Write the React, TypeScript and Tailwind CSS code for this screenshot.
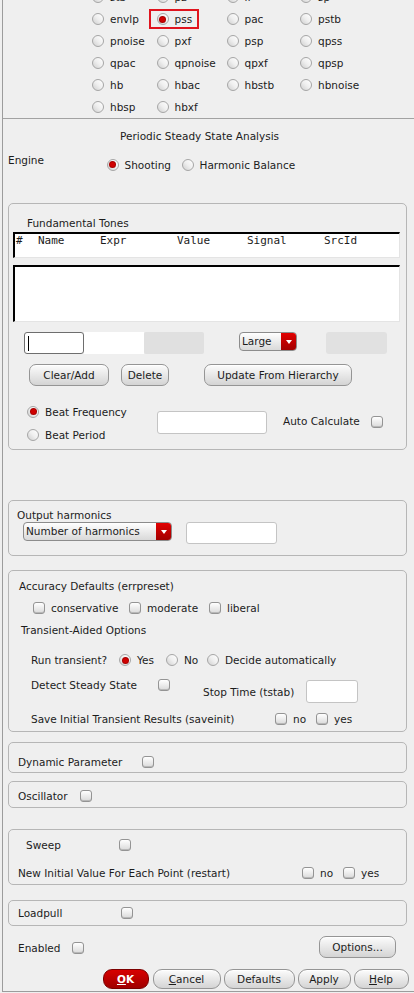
import React from "react";

function Radio({ on = false }: { on?: boolean }) {
  return (
    <span className="inline-flex h-[12px] w-[12px] shrink-0 items-center justify-center rounded-full border border-[#a6a6a6] bg-gradient-to-tr from-[#cfcfcf] via-[#efefef] to-white">
      {on && (
        <span className="h-[5px] w-[5px] rounded-full bg-[#d00000] shadow-[0_0_0_1px_#a80000]" />
      )}
    </span>
  );
}

function Check() {
  return (
    <span className="inline-block h-[12px] w-[12px] shrink-0 rounded-[3px] border border-[#949494] bg-gradient-to-b from-white to-[#dadada] shadow-[inset_0_-1px_0_#b8b8b8]" />
  );
}

function RadioItem({ label, on = false, className = "" }: { label: string; on?: boolean; className?: string }) {
  return (
    <div className={`flex items-center gap-[6px] ${className}`}>
      <Radio on={on} />
      <span>{label}</span>
    </div>
  );
}

function CheckItem({ label, className = "" }: { label: string; className?: string }) {
  return (
    <div className={`flex items-center gap-[6px] ${className}`}>
      <Check />
      <span>{label}</span>
    </div>
  );
}

function Btn({ children, className = "" }: { children: React.ReactNode; className?: string }) {
  return (
    <div
      className={`flex shrink-0 items-center justify-center rounded-[7px] border border-[#959595] bg-gradient-to-b from-[#fcfcfc] to-[#d4d4d4] shadow-[inset_0_1px_0_#ffffff] ${className}`}
    >
      {children}
    </div>
  );
}

function Dropdown({ label, className }: { label: string; className: string }) {
  return (
    <div
      className={`flex shrink-0 overflow-hidden rounded-[4px] border border-[#8c8c8c] bg-gradient-to-b from-white to-[#d9d9d9] ${className}`}
    >
      <span className="flex-1 pl-[2px] leading-[17px]">{label}</span>
      <span className="flex w-[15px] items-center justify-center bg-gradient-to-b from-[#e20000] to-[#a20000]">
        <span className="h-0 w-0 border-x-[3.5px] border-t-[4px] border-x-transparent border-t-white" />
      </span>
    </div>
  );
}

function Box({ className = "", children }: { className?: string; children: React.ReactNode }) {
  return (
    <div className={`ml-[5px] w-[399px] rounded-[5px] border border-[#b6b6b6] ${className}`}>
      {children}
    </div>
  );
}

const analyses = [
  ["stb", "pz", "lf", "sp"],
  ["envlp", "pss", "pac", "pstb"],
  ["pnoise", "pxf", "psp", "qpss"],
  ["qpac", "qpnoise", "qpxf", "qpsp"],
  ["hb", "hbac", "hbstb", "hbnoise"],
  ["hbsp", "hbxf"],
];

export default function App() {
  return (
    <div className="h-[993px] w-[414px] overflow-hidden bg-[#efefef] font-[family-name:DejaVu_Sans,sans-serif] text-[10.5px] leading-[14px] text-[#1c1c1c]">
      <div className="ml-[2px] flex h-[992px] w-[412px] flex-col border-b border-l border-[#9c9c9c]">
        {/* analysis chooser */}
        <div className="h-[119px] shrink-0 overflow-hidden border-b border-[#a2a2a2]">
          <div className="ml-[89px] mt-[-14px] grid grid-cols-[64.5px_70px_73.5px_auto]">
            {analyses.map((row, r) =>
              row.map((name) => (
                <div key={`${r}-${name}`} className="relative flex h-[22px] items-center">
                  <RadioItem label={name} on={name === "pss"} />
                  {name === "pss" && (
                    <span className="absolute left-[-8px] top-[1px] h-[20px] w-[50px] border-2 border-[#e0141e]" />
                  )}
                </div>
              ))
            )}
          </div>
        </div>

        <div className="ml-[117px] mt-[10px]">Periodic Steady State Analysis</div>

        <div className="mt-[10px] flex h-[20px]">
          <span className="ml-[5px] w-[98.5px]">Engine</span>
          <div className="mt-[3px] flex">
            <RadioItem label="Shooting" on className="w-[75px]" />
            <RadioItem label="Harmonic Balance" />
          </div>
        </div>

        {/* Fundamental tones */}
        <Box className="mt-[30px] pb-[3px]">
          <div className="ml-[18px] mt-[12px]">Fundamental Tones</div>
          <div className="ml-[4px] mt-[2px] h-[26px] w-[387px] border-b border-l-2 border-r border-t-2 border-b-[#e4e4e4] border-l-black border-r-[#e4e4e4] border-t-black bg-white">
            <div className="flex pl-[1px] font-[family-name:DejaVu_Sans_Mono,monospace] text-[11px] leading-[13px]">
              <span className="w-[22px]">#</span>
              <span className="w-[62px]">Name</span>
              <span className="w-[77px]">Expr</span>
              <span className="w-[70px]">Value</span>
              <span className="w-[77px]">Signal</span>
              <span>SrcId</span>
            </div>
          </div>
          <div className="ml-[4px] mt-[7px] h-[57px] w-[387px] border-b border-l-2 border-r border-t-2 border-b-[#e4e4e4] border-l-black border-r-[#e4e4e4] border-t-black bg-white" />

          <div className="mt-[10px] flex h-[22px] items-start">
            <div className="ml-[15px] flex h-[22px] w-[60px] items-center rounded-[3px] border border-[#6e6e6e] bg-white pl-[3px]">
              <span className="h-[15px] w-px bg-black" />
            </div>
            <div className="h-[22px] w-[60px] bg-white" />
            <div className="h-[22px] w-[60px] rounded-[2px] bg-[#e0e0e0]" />
            <Dropdown label="Large" className="ml-[35px] h-[19px] w-[58px]" />
            <div className="ml-[29px] h-[22px] w-[61px] rounded-[3px] bg-[#e1e1e1]" />
          </div>

          <div className="mt-[10px] flex h-[22px]">
            <Btn className="ml-[20px] w-[80px]">Clear/Add</Btn>
            <Btn className="ml-[12px] w-[48px]">Delete</Btn>
            <Btn className="ml-[35px] w-[148px]">Update From Hierarchy</Btn>
          </div>

          <div className="mt-[14px] flex h-[46px]">
            <div className="ml-[18px] w-[130px]">
              <RadioItem label="Beat Frequency" on className="h-[23px]" />
              <RadioItem label="Beat Period" className="h-[23px]" />
            </div>
            <div className="mt-[11px] h-[23px] w-[110px] rounded-[3px] border border-[#c4c4c4] bg-white" />
            <div className="ml-[16px] mt-[14px] w-[88px]">Auto Calculate</div>
            <div className="mt-[16px]">
              <Check />
            </div>
          </div>
        </Box>

        {/* Output harmonics */}
        <Box className="mt-[50px] pb-[11px]">
          <div className="ml-[8px] mt-[7px]">Output harmonics</div>
          <div className="flex h-[22px] items-start">
            <Dropdown label="Number of harmonics" className="ml-[14px] h-[19px] w-[149px]" />
            <div className="ml-[14px] h-[22px] w-[91px] rounded-[3px] border border-[#c4c4c4] bg-white" />
          </div>
        </Box>

        {/* Accuracy */}
        <Box className="mt-[14px] pb-[5px]">
          <div className="ml-[10px] mt-[8px]">Accuracy Defaults (errpreset)</div>
          <div className="mt-[8px] flex h-[14px]">
            <CheckItem label="conservative" className="ml-[24px] w-[96px]" />
            <CheckItem label="moderate" className="w-[80px]" />
            <CheckItem label="liberal" />
          </div>
          <div className="ml-[12px] mt-[8px]">Transient-Aided Options</div>
          <div className="mt-[16px] flex h-[14px] items-center">
            <span className="ml-[22px] w-[88px]">Run transient?</span>
            <RadioItem label="Yes" on className="w-[47px]" />
            <RadioItem label="No" className="w-[41px]" />
            <RadioItem label="Decide automatically" />
          </div>
          <div className="mt-[11px] flex h-[25px]">
            <span className="ml-[22px] w-[127px]">Detect Steady State</span>
            <div className="mt-[1px]">
              <Check />
            </div>
            <span className="ml-[33px] mt-[7px] w-[103px]">Stop Time (tstab)</span>
            <div className="mt-[2px] h-[23px] w-[52px] rounded-[3px] border border-[#c4c4c4] bg-white" />
          </div>
          <div className="mt-[9px] flex h-[14px]">
            <span className="ml-[22px] w-[244px]">Save Initial Transient Results (saveinit)</span>
            <CheckItem label="no" className="w-[41px]" />
            <CheckItem label="yes" />
          </div>
        </Box>

        <Box className="mt-[10px] h-[31px]">
          <div className="ml-[9px] mt-[12px] flex items-center">
            <span className="w-[124px]">Dynamic Parameter</span>
            <Check />
          </div>
        </Box>

        <Box className="mt-[8px] h-[27px]">
          <div className="ml-[9px] mt-[7px] flex items-center">
            <span className="w-[62px]">Oscillator</span>
            <Check />
          </div>
        </Box>

        <Box className="mt-[21px] h-[56px]">
          <div className="ml-[17px] mt-[8px] flex h-[14px] items-center">
            <span className="w-[93px]">Sweep</span>
            <Check />
          </div>
          <div className="ml-[9px] mt-[14px] flex h-[14px] items-center">
            <span className="w-[284px]">New Initial Value For Each Point (restart)</span>
            <CheckItem label="no" className="w-[41px]" />
            <CheckItem label="yes" />
          </div>
        </Box>

        <Box className="mt-[15px] h-[26px]">
          <div className="ml-[9px] mt-[5px] flex h-[14px] items-center">
            <span className="w-[103px]">Loadpull</span>
            <Check />
          </div>
        </Box>

        <div className="mt-[10px] flex h-[22px]">
          <div className="ml-[15px] mt-[5px] flex h-[14px] items-center">
            <span className="w-[54px]">Enabled</span>
            <Check />
          </div>
          <Btn className="ml-auto mr-[18px] h-[22px] w-[77px]">Options...</Btn>
        </div>

        <div className="mt-[11px] flex h-[20px] pl-[99.5px]">
          <div className="flex w-[46px] items-center justify-center rounded-[9px] border border-[#7c0000] bg-gradient-to-b from-[#d80000] to-[#a00000] font-bold text-white">
            <span>
              <span className="underline">O</span>K
            </span>
          </div>
          <Btn className="ml-[4px] w-[68px] rounded-[9px]">
            <span>
              <span className="underline">C</span>ancel
            </span>
          </Btn>
          <Btn className="ml-[3px] w-[71px] rounded-[9px]">Defaults</Btn>
          <Btn className="ml-[3px] w-[53px] rounded-[9px]">Apply</Btn>
          <Btn className="ml-[3px] w-[55px] rounded-[9px]">
            <span>
              <span className="underline">H</span>elp
            </span>
          </Btn>
        </div>
      </div>
    </div>
  );
}
